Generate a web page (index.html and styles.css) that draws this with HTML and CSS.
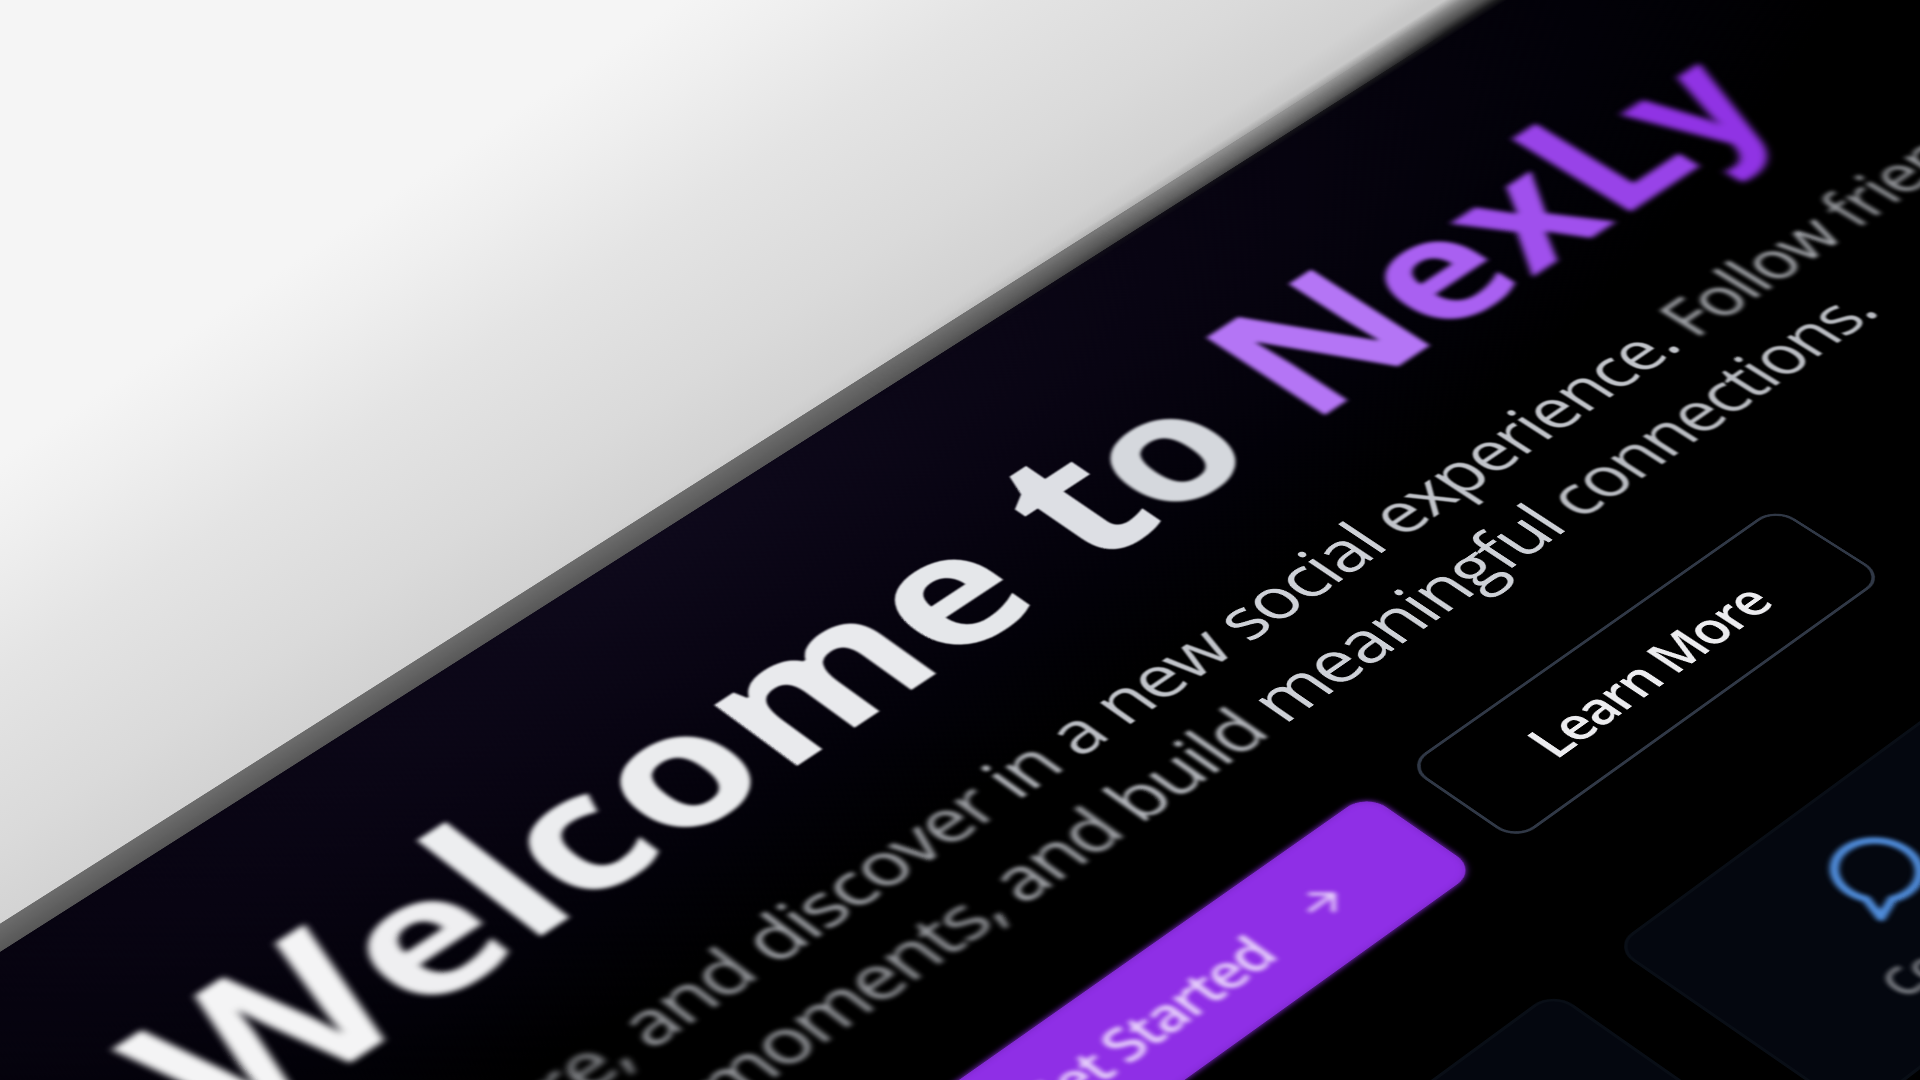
FILE: index.html
```html
<!DOCTYPE html>
<html lang="en">
<head>
<meta charset="utf-8">
<title>NexLy</title>
<link rel="stylesheet" href="styles.css">
</head>
<body>
<div class="stage">
  <main class="page">
    <div class="rim rim-sharp"></div>
    <div class="rim rim-soft"></div>
    <section class="hero">
      <h1 class="title"><span class="g g1">W</span><span class="g g2 low">e</span><span class="g g3">l</span><span class="g g4 low">c</span><span class="g g5 low">o</span><span class="g g6 low">m</span><span class="g g7 low">e</span> <span class="g g8">t</span><span class="g g9 low">o</span> <span class="g g10">N</span><span class="g g11 low">e</span><span class="g g12 low">x</span><span class="g g13">L</span><span class="g g14 low">y</span></h1>
      <p class="tagline"><span class="b7">Connect,</span> <span class="b7">share,</span> <span class="b6">and</span> <span class="b5">discover</span> <span class="b3">in</span> <span class="b2">a</span> <span class="b1">new</span> social <span class="b1">experience.</span> <span class="b4">Follow</span> <span class="b6">friends,</span><br><span class="line-two"><span class="b7">share</span> <span class="b6">moments,</span> <span class="b4">and</span> <span class="b3">build</span> meaningful <span class="b2">connections.</span></span></p>
      <div class="actions">
        <a class="btn btn-primary"><span class="soft-label">Get Started</span>
          <svg class="arrow" viewBox="0 0 24 24"><path d="M5 12h14M12 5l7 7-7 7"/></svg>
        </a>
        <a class="btn btn-outline">Learn More</a>
      </div>
      <div class="cards">
        <div class="card"></div>
        <div class="card"></div>
        <div class="card">
          <svg class="card-icon" viewBox="0 0 24 24"><path d="M7.9 20A9 9 0 1 0 4 16.1L2 22Z"/></svg>
          <span class="card-label">Comment</span>
        </div>
        <div class="card"></div>
      </div>
    </section>
  </main>
</div>
</body>
</html>
```
FILE: styles.css
```css
* { box-sizing: border-box; }

body {
  margin: 0;
  overflow: hidden;
  font-family: "Open Sans", "Noto Sans", sans-serif;
}

.stage {
  width: 1920px;
  height: 1080px;
  overflow: hidden;
  background: linear-gradient(146deg, #f5f5f5 380px, #efefef 450px, #e4e4e4 560px, #dadada 700px, #d2d2d2 780px, #c8c8c8 800px);
}

/* The page lies on a tilted plane seen through a long lens.
   It is laid out at four times its size so that it stays crisp when magnified. */
.page {
  position: relative;
  width: 6400px;
  height: 3360px;
  transform-origin: 0 0;
  transform: matrix3d(0.6887275, -0.38341, 0, 0.0000574, 0.52901, 0.37613, 0, -0.000065415, 0, 0, 1, 0, -1362.64, 1670.26, 0, 0.873451);
  background: radial-gradient(ellipse 2080px 600px at 2920px 0, #0e091b, #080412 40%, #020108 75%, #000 100%) 0 36px no-repeat;
}

/* The lit edge of the slab, losing focus toward the far end. */
.rim {
  position: absolute;
  top: 0;
  left: 0;
  width: 100%;
  height: 36px;
  background: linear-gradient(#6c6c6c, #575757);
}

.rim-sharp {
  -webkit-mask-image: linear-gradient(90deg, #000 3700px, transparent 4300px);
  mask-image: linear-gradient(90deg, #000 3700px, transparent 4300px);
}

.rim-soft {
  top: -30px;
  left: 3300px;
  width: 3100px;
  height: 100px;
  background: linear-gradient(transparent 18px, #8a8a8a 33px, #6a6a6a 44px, #505050 54px, #1c1c1e 66px, transparent 76px);
  -webkit-mask-image: linear-gradient(90deg, transparent, #000 1000px);
  mask-image: linear-gradient(90deg, transparent, #000 1000px);
}

.hero {
  zoom: 4;
  position: relative;
  display: flex;
  flex-direction: column;
  align-items: center;
  padding: 49px 1.5px 0 0;
  text-align: center;
}

.title {
  margin: 0 0 19.6px;
  padding-left: 7.5px;
  font-size: 72px;
  line-height: 72px;
  font-weight: 700;
  letter-spacing: -1.8px;
  white-space: nowrap;
}

.low {
  font-size: 0.92em;
  padding: 0 0.025em;
}

/* Title glyphs: tone runs along the gradient, softness follows depth. */
.g1 { color: #f4f4f5; filter: blur(1.2px); }
.g2 { color: #efeff1; filter: blur(1.05px); }
.g3 { color: #edeef0; filter: blur(0.9px); }
.g4 { color: #ecedef; filter: blur(0.75px); margin-left: -0.8px; }
.g5 { color: #ebecee; filter: blur(0.6px); margin-left: -0.8px; }
.g6 { color: #e9eaed; filter: blur(0.35px); }
.g7 { color: #e5e7ea; filter: blur(0.25px); margin: 0 1px 0 -1px; }
.g8 { color: #dddfe4; filter: blur(0.3px); margin-left: 1.6px; }
.g9 { color: #d5d8dd; filter: blur(0.5px); margin: 0 1px 0 -1px; }
.g10 { color: #b475f5; filter: blur(0.75px); margin-left: 2px; }
.g11 { color: #a960f1; filter: blur(0.9px); margin-left: -0.8px; }
.g12 { color: #a050ed; filter: blur(1.05px); margin-left: -1px; }
.g13 { color: #9843e8; filter: blur(1.2px); }
.g14 { color: #9033e4; filter: blur(1.3px); font-size: 0.9em; margin-left: -1.2px; }

.b1 { filter: blur(0.28px); opacity: 0.94; }
.b2 { filter: blur(0.45px); opacity: 0.9; }
.b3 { filter: blur(0.6px); opacity: 0.86; }
.b4 { filter: blur(0.75px); opacity: 0.8; }
.b5 { filter: blur(0.85px); opacity: 0.78; }
.b6 { filter: blur(0.95px); opacity: 0.74; }
.b7 { filter: blur(1.05px); opacity: 0.7; }

.tagline {
  margin: 0 0 30px;
  padding-right: 2.8px;
  font-size: 24px;
  line-height: 32px;
  letter-spacing: -0.66px;
  white-space: nowrap;
  color: #ced1d7;
}

.line-two {
  letter-spacing: -0.71px;
}

.actions {
  display: flex;
  gap: 16px;
  margin-bottom: 48px;
}

.btn {
  display: flex;
  align-items: center;
  justify-content: center;
  height: 44px;
  padding: 0 32px;
  border-radius: 8px;
  font-size: 18px;
  font-weight: 600;
  letter-spacing: -0.7px;
  white-space: nowrap;
  color: #ececef;
}

.btn-primary {
  width: 188px;
  gap: 16px;
  background: #8f2fe6;
  box-shadow: 0 0 2px #8f2fe6, inset 0 0 2px #7526bd;
  color: #e8d3fb;
}

.btn-outline {
  width: 157.5px;
  border: 1px solid #303846;
}

.soft-label {
  filter: blur(0.8px);
}

.arrow {
  flex: none;
  width: 16px;
  height: 16px;
  filter: blur(0.8px);
}

.arrow,
.card-icon {
  fill: none;
  stroke: currentColor;
  stroke-width: 2;
  stroke-linecap: round;
  stroke-linejoin: round;
  overflow: visible;
}

.cards {
  display: grid;
  grid-template-columns: repeat(4, 150px);
  gap: 24px;
}

.card {
  display: flex;
  flex-direction: column;
  align-items: center;
  gap: 8px;
  height: 92px;
  padding: 15px;
  border: 1px solid #090e16;
  border-radius: 8px;
  background: #04070f;
}

.card-icon {
  width: 32px;
  height: 32px;
  color: #4f8cda;
  filter: blur(0.8px);
}

.card-label {
  font-size: 14px;
  line-height: 20px;
  color: #aeb1b7;
  filter: blur(0.75px);
}
```
